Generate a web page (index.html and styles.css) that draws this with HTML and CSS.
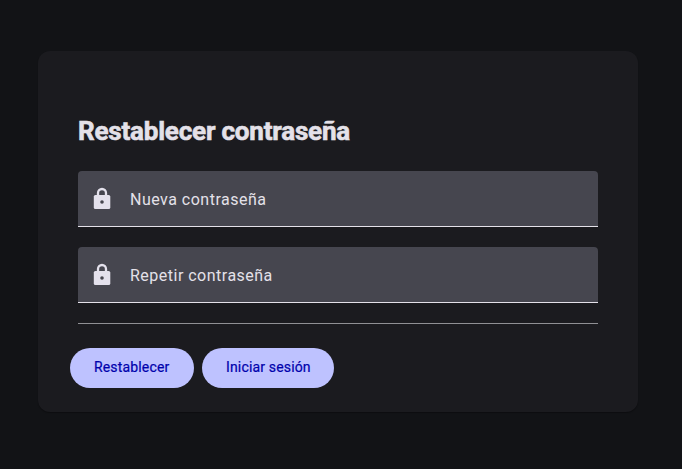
FILE: index.html
```html
<!DOCTYPE html>
<html lang="es">
<head>
<meta charset="utf-8">
<title>Restablecer contraseña</title>
<link rel="stylesheet" href="styles.css">
</head>
<body>
<main class="card">
  <h1 class="title">Restablecer contraseña</h1>
  <form class="form">
    <label class="field">
      <svg class="lock" viewBox="0 0 24 24"><rect x="3.800" y="8" width="16.500" height="14" rx="1.600"/><path class="shackle" d="M8 9V6a4 4 0 0 1 8 0v3"/><circle class="keyhole" cx="12" cy="15" r="1.800"/></svg>
      <span class="label">Nueva contraseña</span>
    </label>
    <label class="field">
      <svg class="lock" viewBox="0 0 24 24"><rect x="3.800" y="8" width="16.500" height="14" rx="1.600"/><path class="shackle" d="M8 9V6a4 4 0 0 1 8 0v3"/><circle class="keyhole" cx="12" cy="15" r="1.800"/></svg>
      <span class="label">Repetir contraseña</span>
    </label>
  </form>
  <div class="divider"></div>
  <div class="actions">
    <button class="button" type="button">Restablecer</button>
    <button class="button wide" type="button">Iniciar sesión</button>
  </div>
</main>
</body>
</html>
```

FILE: styles.css
```css
* { box-sizing: border-box; }
body {
  margin: 0;
  padding: 51px 44px 0 38px;
  height: 469px;
  overflow: hidden;
  background: #121316;
  color: #e4e1e9;
  font-family: Roboto, sans-serif;
}
.card {
  width: 600px;
  height: 361px;
  padding: 64px 40px 0;
  border-radius: 12px;
  background: #1b1b1f;
  box-shadow: 0 1px 1px rgba(0, 0, 0, .3);
}
.title {
  margin: 0 0 24px;
  font-size: 26px;
  font-weight: 700;
  line-height: 32px;
  letter-spacing: -.2px;
  -webkit-text-stroke: .6px #e4e1e9;
}
.form { display: flex; flex-direction: column; gap: 20px; }
.field {
  display: flex;
  align-items: center;
  height: 56px;
  padding-left: 12px;
  border-bottom: 1px solid #e4e1e9;
  border-radius: 4px 4px 0 0;
  background: #46464f;
  font-size: 16px;
  letter-spacing: .49px;
}
.label { padding-top: 2px; }
.lock { width: 24px; height: 24px; margin-right: 16px; fill: #e4e1ec; }
.shackle { fill: none; stroke: #e4e1ec; stroke-width: 2.3; }
.keyhole { fill: #46464f; }
.divider { height: 1px; margin-top: 20px; background: #909094; }
.actions { display: flex; gap: 8px; margin: 24px 0 0 -8px; }
.button {
  width: 124px;
  height: 40px;
  padding: 0 0 2px 24px;
  border: 0;
  border-radius: 20px;
  background: #bec2ff;
  color: #0001ac;
  font: 400 14px/20px Roboto, sans-serif;
  letter-spacing: .16px;
  text-align: left;
  white-space: nowrap;
  -webkit-text-stroke: .2px #0001ac;
}
.wide { width: 132px; }
```
